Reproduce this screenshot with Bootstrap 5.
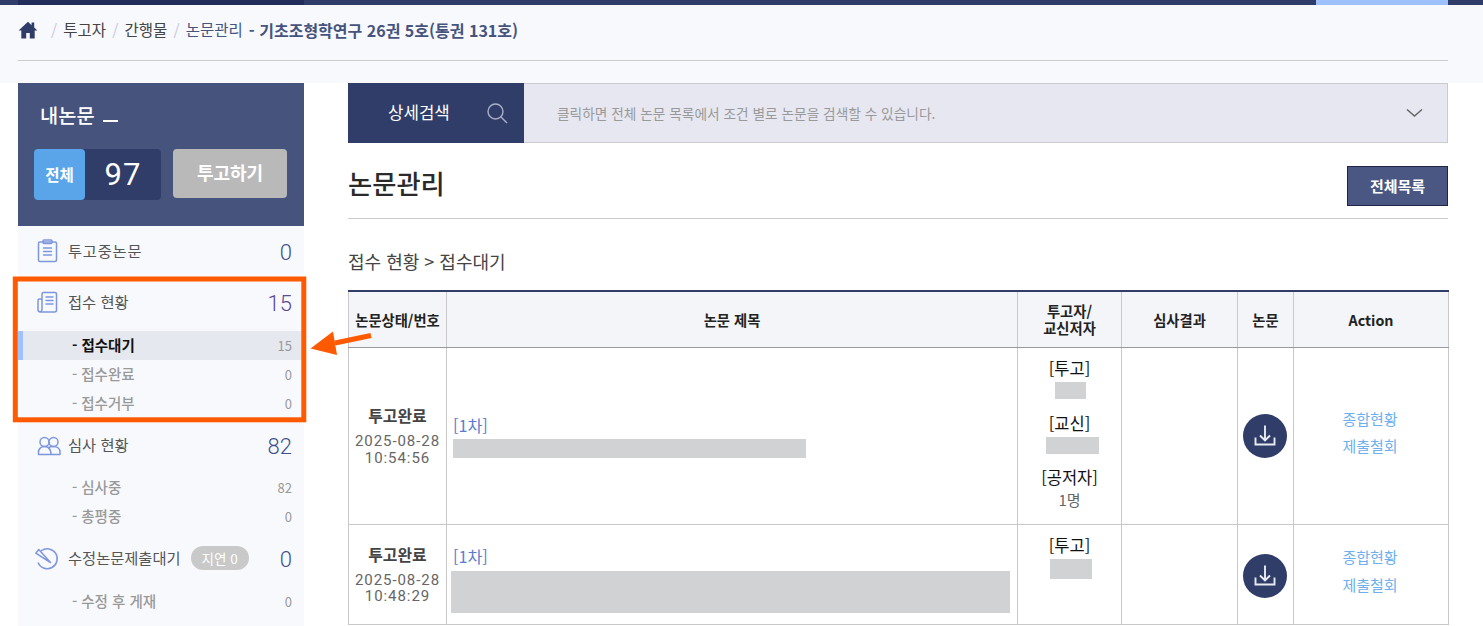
<!DOCTYPE html>
<html lang="ko">
<head>
<meta charset="utf-8">
<title>논문관리</title>
<link href="https://cdn.jsdelivr.net/npm/bootstrap@5.3.0/dist/css/bootstrap.min.css" rel="stylesheet">
<style>
html,body{height:626px;overflow:hidden;background:#fff}
body{font-family:"Noto Sans CJK KR","Noto Sans",sans-serif;color:#333;font-size:14px;position:relative}
.topstrip{height:5px;background:#303d68;padding-left:18px;padding-right:35px}
.topstrip-dark{width:286px;background:#232d5b}
.topstrip-light{width:132px;background:#9fc2ff}
.crumbband{height:78px;background:#f8f9fd;padding:0 35px 0 18px}
.crumbline{height:56px;border-bottom:1px solid #ccc;font-size:15.500px;padding-bottom:5px;color:#444}
.crumbsep{color:#c5c9dc;margin:0 6.200px}
.crumbhome{margin-right:13px}
.crumbcur{color:#46547d}
.crumbtitle{color:#46547d;font-weight:700;margin-left:6px;font-size:16px}
.shell{padding-left:18px;padding-right:35px;gap:44px}
.sidepane{width:286px;height:543px;background:#f8f9fd;flex:none}
.sidetop{height:143px;background:#46547d;padding:17px 17px 0 16px;color:#fff}
.sidetop-title{font-size:19.800px;font-weight:500;padding-left:6px;line-height:29px;margin-bottom:20px}
.sidetop-dash{width:15px;height:2px;background:#fff;margin:12px 0 0 8px}
.totalchip{width:127px;height:51px;background:#303d68;border-radius:4px}
.totalchip-label{width:51px;height:51px;background:#5aa5ea;border-radius:4px;font-size:15.500px;font-weight:700}
.totalchip-num{font-size:31px;line-height:1;font-family:Roboto,sans-serif;letter-spacing:1px;padding-bottom:1px}
.submitbtn{width:114px;height:49px;background:#b9b9b9;border-radius:4px;font-size:18px;font-weight:700;color:#fff;margin-left:12px;padding-bottom:2px}
.menuhead{height:50px;padding:0 12px 2px 17px;color:#555;font-size:15.300px}
.menulabel-wide{letter-spacing:.8px}
.menuicon{width:26px;height:26px;margin-right:7px;flex:none;fill:none;stroke:#7e97dc;stroke-width:1.5;stroke-linejoin:round;stroke-linecap:round;position:relative;top:1px}
.menunum{margin-left:auto;font-size:22px;font-weight:300;color:#3f4f8c;font-family:Roboto,sans-serif;padding-top:5px}
.menunum-plum{color:#5a4b8f}
.menusubs{padding:4px 0 2px}
.menusubs-tight{padding-top:3px;padding-bottom:2px}
.menusub{height:29px;padding:0 12px 0 54px;color:#999;font-size:14.500px;font-weight:500;line-height:1}
.menusub-num{margin-left:auto;font-size:13px;font-weight:400}
.menusub-on{background:#e6e8f0;color:#111;font-weight:700;border-left:5px solid #9fc2ff;padding-left:49px}
.menusub-on .menusub-num{color:#999}
.latepill{background:#c9c9c9;color:#fff;border-radius:12px;height:24px;padding:0 11px;font-size:13.500px;margin-left:10px;position:relative;top:1px}
.firsthead{margin-bottom:1px}
.mainpane{width:1100px;flex:none}
.searchbar{height:60px;background:#e6e7f0;border:1px solid #ccc;border-left:0}
.searchtab{width:176px;height:60px;margin-top:-1px;background:#303d68;color:#fff;font-size:16.800px;padding-left:40px}
.searchhint{color:#999;font-size:13.700px;padding-left:33px}
.titlerow{height:76px;border-bottom:1px solid #ccc;padding-top:23px;padding-bottom:12px}
.pagetitle{font-size:26.300px;font-weight:500;color:#2a2a2a;margin:0;line-height:1;position:relative;top:-3px}
.listbtn{width:101px;height:40px;background:#4a5783;border:1px solid #1f2547;color:#fff;font-size:15px;font-weight:700;padding:0;border-radius:0}
.listbtn:hover{background:#4a5783;color:#fff}
.sectionlabel{font-size:18px;color:#444;line-height:24px;padding-top:30px;margin-bottom:17px}
.papers{table-layout:fixed;width:1100px;margin:0;border-collapse:collapse;border-top:2px solid #303d68}
.papers th,.papers td{border:1px solid #c9c9c9;padding:0;text-align:center;vertical-align:middle;box-shadow:none}
.papers thead th{height:56px;background:#f4f5f8;font-size:14.300px;font-weight:700;color:#222;line-height:17px;border-bottom:1px solid #999;border-top:0}
.col-a{width:98px}.col-b{width:571px}.col-c{width:104px}.col-d{width:116px}.col-e{width:56px}.col-f{width:155px}
.rowtall{height:177px}
.rowshort{height:100px}
.papers td.statecell{padding-top:1px}
.statename{font-weight:700;color:#444;font-size:15.900px;line-height:20px;margin-bottom:7px}
.statedate{color:#666;font-size:15px;line-height:16.500px;font-family:Roboto,sans-serif;letter-spacing:.95px}
.papers td.titlecell{text-align:left;padding-left:6px;padding-top:3px}
.papers td.titlecell-top{vertical-align:top;padding:22px 0 0 4px}
.roundlink{color:#5c7bd0;font-size:16.200px;line-height:18px;display:block;text-decoration:none}
.titlecell-top .roundlink{padding-left:2px}
.blockout{background:#d1d2d4;display:block}
.blockout-title{width:353px;height:19px;margin-top:5px}
.blockout-wide{width:559px;height:42px;margin-top:6px}
.papers td.authorcell{vertical-align:top;padding-top:11px}
.authorlabel{color:#111;font-size:16.500px;line-height:18px}
.blockout-a{width:31px;height:17px;margin:5px 0 15px 37px}
.blockout-b{width:53px;height:17px;margin:5px 0 14px 28px}
.blockout-c{width:42px;height:20px;margin:5px 0 0 32px}
.coauthors{color:#666;font-size:15px;line-height:18px;margin-top:5px}
.papers td.dlcell{padding:0 2px 0 0}
.papers td.dlcell-low{padding-top:4px}
.dlround{width:44px;height:44px;border-radius:50%;background:#303d68;border:0;padding:0;display:block;margin:auto}
.dlround svg{display:block;margin:auto;width:24px;height:24px;fill:none;stroke:#e8ebf3;stroke-width:1.9}
.papers td.actcell{padding:0 2px 6px 0}
.actlink{display:block;color:#6cb0ee;font-size:15px;line-height:20px;text-decoration:none}
.actlink+.actlink{margin-top:7.500px}
.callout{position:absolute;left:0;top:0;width:400px;height:440px;pointer-events:none}
</style>
</head>
<body>
<div class="topstrip d-flex justify-content-between">
  <div class="topstrip-dark"></div>
  <div class="topstrip-light"></div>
</div>
<div class="crumbband">
  <div class="crumbline d-flex align-items-center">
    <svg class="crumbhome" width="20" height="18" viewBox="0 0 20 18"><path fill="#303d68" d="M10 .8 0.600 9.600h2.700V17.600h4.900v-5.600h3.600v5.600h4.900V9.600h2.700l-3.200-3V1.600h-2.600v2.600z"/></svg>
    <span class="crumbsep ms-0">/</span><span>투고자</span>
    <span class="crumbsep">/</span><span>간행물</span>
    <span class="crumbsep">/</span><span class="crumbcur">논문관리</span>
    <span class="crumbtitle">- 기초조형학연구 26권 5호(통권 131호)</span>
  </div>
</div>
<div class="shell d-flex">
  <aside class="sidepane">
    <div class="sidetop">
      <div class="sidetop-title d-flex align-items-center"><span>내논문</span><span class="sidetop-dash"></span></div>
      <div class="d-flex align-items-start">
        <div class="totalchip d-flex align-items-center">
          <div class="totalchip-label d-flex align-items-center justify-content-center">전체</div>
          <div class="totalchip-num flex-grow-1 text-center">97</div>
        </div>
        <div class="submitbtn d-flex align-items-center justify-content-center">투고하기</div>
      </div>
    </div>
    <div class="menuhead firsthead d-flex align-items-center">
      <svg class="menuicon" viewBox="0 0 26 26"><rect x="3.500" y="4" width="18" height="19.500" rx="1.500"/><rect x="8" y="2" width="9" height="3.500" rx="1"/><path d="M8.500 10h8M8.500 13.500h8M8.500 17h8"/></svg>
      <span class="menulabel-wide">투고중논문</span><span class="menunum">0</span>
    </div>
    <div class="menuhead d-flex align-items-center">
      <svg class="menuicon" viewBox="0 0 26 26"><path d="M7 10H4.500A1.500 1.500 0 0 0 3 11.500V20.500A2.500 2.500 0 0 0 5.500 23H19.500a2 2 0 0 0 2-2V5A1.500 1.500 0 0 0 20 3.500H8.500A1.500 1.500 0 0 0 7 5V20.500a2.500 2.500 0 0 1-2 2.400"/><path d="M11 8h7M11 11.500h7M11 15h7"/></svg>
      <span>접수 현황</span><span class="menunum menunum-plum">15</span>
    </div>
    <div class="menusubs">
      <div class="menusub menusub-on d-flex align-items-center"><span>- 접수대기</span><span class="menusub-num">15</span></div>
      <div class="menusub d-flex align-items-center"><span>- 접수완료</span><span class="menusub-num">0</span></div>
      <div class="menusub d-flex align-items-center"><span>- 접수거부</span><span class="menusub-num">0</span></div>
    </div>
    <div class="menuhead d-flex align-items-center">
      <svg class="menuicon" viewBox="0 0 26 26"><circle cx="9.500" cy="10" r="4.500"/><circle cx="18.500" cy="10" r="4.500"/><path d="M3.500 22.500v-2.500c0-3 2.500-5.500 6-5.500 1.500 0 2.800.4 3.800 1.200M3.500 22.500H25v-2.500c0-3-2.500-5.500-6.500-5.500-2.200 0-4 .5-5.200 1.200M13.300 15.700c1.500 1.200 2.700 3.500 2.700 6.800"/></svg>
      <span>심사 현황</span><span class="menunum">82</span>
    </div>
    <div class="menusubs menusubs-tight">
      <div class="menusub d-flex align-items-center"><span>- 심사중</span><span class="menusub-num">82</span></div>
      <div class="menusub d-flex align-items-center"><span>- 총평중</span><span class="menusub-num">0</span></div>
    </div>
    <div class="menuhead d-flex align-items-center">
      <svg class="menuicon" viewBox="0 0 26 26"><path d="M6.500 5.500A10 10 0 1 1 3.200 18"/><path d="M.8 8.200 3.800 4.500 15.500 17.500z"/></svg>
      <span>수정논문제출대기</span><span class="latepill d-inline-flex align-items-center">지연 0</span><span class="menunum">0</span>
    </div>
    <div class="menusubs">
      <div class="menusub d-flex align-items-center"><span>- 수정 후 게재</span><span class="menusub-num">0</span></div>
    </div>
  </aside>
  <main class="mainpane">
    <div class="searchbar d-flex align-items-center">
      <div class="searchtab d-flex align-items-center">
        <span>상세검색</span>
        <svg class="ms-auto me-3" width="22" height="22" viewBox="0 0 22 22" fill="none" stroke="#aab0c4" stroke-width="1.400"><circle cx="9.500" cy="9.500" r="7.500"/><path d="m15 15 6 6"/></svg>
      </div>
      <div class="searchhint flex-grow-1">클릭하면 전체 논문 목록에서 조건 별로 논문을 검색할 수 있습니다.</div>
      <svg class="me-4" width="17" height="10" viewBox="0 0 17 10" fill="none" stroke="#666" stroke-width="1.500"><path d="m1 1.500 7.500 6.500L16 1.500"/></svg>
    </div>
    <div class="titlerow d-flex align-items-center justify-content-between">
      <h1 class="pagetitle">논문관리</h1>
      <button type="button" class="btn listbtn">전체목록</button>
    </div>
    <div class="sectionlabel">접수 현황 &gt; 접수대기</div>
    <table class="table papers">
      <colgroup><col class="col-a"><col class="col-b"><col class="col-c"><col class="col-d"><col class="col-e"><col class="col-f"></colgroup>
      <thead>
        <tr><th>논문상태/번호</th><th>논문 제목</th><th>투고자/<br>교신저자</th><th>심사결과</th><th>논문</th><th>Action</th></tr>
      </thead>
      <tbody>
        <tr class="rowtall">
          <td class="statecell"><div class="statename">투고완료</div><div class="statedate">2025-08-28<br>10:54:56</div></td>
          <td class="titlecell"><a href="#" class="roundlink">[1차]</a><span class="blockout blockout-title"></span></td>
          <td class="authorcell">
            <div class="authorlabel">[투고]</div><span class="blockout blockout-a"></span>
            <div class="authorlabel">[교신]</div><span class="blockout blockout-b"></span>
            <div class="authorlabel">[공저자]</div><div class="coauthors">1명</div>
          </td>
          <td></td>
          <td class="dlcell"><button type="button" class="dlround" aria-label="다운로드"><svg viewBox="0 0 24 24"><path d="M12 1.500V16M7 11.500l5 5 5-5M2.500 13.500V20.500H21.500V13.500"/></svg></button></td>
          <td class="actcell"><a href="#" class="actlink">종합현황</a><a href="#" class="actlink">제출철회</a></td>
        </tr>
        <tr class="rowshort">
          <td class="statecell"><div class="statename">투고완료</div><div class="statedate">2025-08-28<br>10:48:29</div></td>
          <td class="titlecell titlecell-top"><a href="#" class="roundlink">[1차]</a><span class="blockout blockout-wide"></span></td>
          <td class="authorcell">
            <div class="authorlabel">[투고]</div><span class="blockout blockout-c"></span>
          </td>
          <td></td>
          <td class="dlcell dlcell-low"><button type="button" class="dlround" aria-label="다운로드"><svg viewBox="0 0 24 24"><path d="M12 1.500V16M7 11.500l5 5 5-5M2.500 13.500V20.500H21.500V13.500"/></svg></button></td>
          <td class="actcell"><a href="#" class="actlink">종합현황</a><a href="#" class="actlink">제출철회</a></td>
        </tr>
      </tbody>
    </table>
  </main>
</div>
<svg class="callout" viewBox="0 0 400 440">
  <rect x="15.300" y="279" width="288.500" height="140.800" fill="none" stroke="#ff5a00" stroke-width="5"/>
  <path d="M371 335.500 335 343" stroke="#ff5a00" stroke-width="5" fill="none"/>
  <path d="M310.500 348.500 333 331.500 337 355z" fill="#ff5a00"/>
</svg>
</body>
</html>
